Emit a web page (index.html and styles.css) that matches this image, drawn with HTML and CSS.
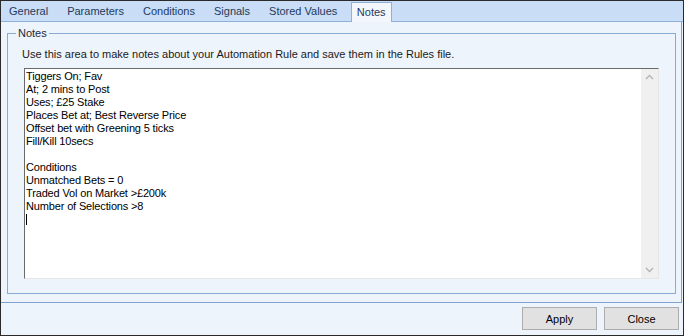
FILE: index.html
```html
<!DOCTYPE html>
<html>
<head>
<meta charset="utf-8">
<link rel="stylesheet" href="styles.css">
</head>
<body>
<div class="window">
  <div class="tabs">
    <div class="tab first">General</div>
    <div class="tab">Parameters</div>
    <div class="tab">Conditions</div>
    <div class="tab">Signals</div>
    <div class="tab">Stored Values</div>
    <div class="tab active">Notes</div>
  </div>
  <div class="panel">
    <fieldset class="group">
      <legend class="legend">Notes</legend>
      <p class="desc">Use this area to make notes about your Automation Rule and save them in the Rules file.</p>
      <div class="editor">
        <div class="lines">
          <div class="line">Tiggers On; Fav</div>
          <div class="line">At; 2 mins to Post</div>
          <div class="line">Uses; £25 Stake</div>
          <div class="line">Places Bet at; Best Reverse Price</div>
          <div class="line">Offset bet with Greening 5 ticks</div>
          <div class="line">Fill/Kill 10secs</div>
          <div class="line">&nbsp;</div>
          <div class="line">Conditions</div>
          <div class="line">Unmatched Bets = 0</div>
          <div class="line">Traded Vol on Market &gt;£200k</div>
          <div class="line">Number of Selections &gt;8</div>
          <div class="line"><span class="caret"></span></div>
        </div>
        <div class="scrollbar">
          <svg class="arrow" width="9" height="6" viewBox="0 0 9 6"><path d="M1 5 L4.5 1.5 L8 5" fill="none" stroke="#b4b4b4" stroke-width="1.4"/></svg>
          <svg class="arrow" width="9" height="6" viewBox="0 0 9 6"><path d="M1 1 L4.5 4.5 L8 1" fill="none" stroke="#b4b4b4" stroke-width="1.4"/></svg>
        </div>
      </div>
    </fieldset>
  </div>
  <div class="footer">
    <button class="btn">Apply</button>
    <button class="btn">Close</button>
  </div>
</div>
</body>
</html>
```
FILE: styles.css
```css
html, body {
  margin: 0;
  padding: 0;
}
body {
  width: 684px;
  height: 336px;
  font-family: "Liberation Sans", Arial, sans-serif;
  font-size: 11px;
  color: #000;
}
.window {
  box-sizing: border-box;
  width: 684px;
  height: 336px;
  border: 1px solid #2a2a2a;
  background: #eef4fb;
  display: flex;
  flex-direction: column;
}
.tabs {
  height: 20px;
  background: #c9ddf6;
  border-bottom: 1px solid #8fb0d8;
  display: flex;
  align-items: flex-end;
}
.tab {
  height: 20px;
  line-height: 20px;
  padding: 0 9.5px;
  color: #1e3a5c;
  box-sizing: border-box;
}
.tab.first {
  margin-left: -1.5px;
}
.tab.active {
  height: 20px;
  margin-bottom: -1px;
  padding: 0 5px;
  background: #f3f7fc;
  border: 1px solid #8fb0d8;
  border-bottom: none;
  line-height: 19px;
  margin-left: 4px;
}
.panel {
  flex: 1;
  border-right: 1px solid #7fa2cf;
  border-bottom: 1px solid #7fa2cf;
  margin-right: 1px;
  display: flex;
  flex-direction: column;
}
.group {
  flex: 1;
  margin: 5px 5px 8px 6px;
  padding: 0 14px 14px 14px;
  border: 1px solid #8aaad2;
  display: flex;
  flex-direction: column;
  min-width: 0;
}
.legend {
  padding: 0 2px;
  margin-left: -6px;
  line-height: 13px;
  color: #1e2a3a;
}
.desc {
  margin: 8px 0 7px 0;
  line-height: 13px;
  color: #1a1a1a;
}
.editor {
  flex: 1;
  margin: 0 2px;
  background: #fff;
  border-top: 1px solid #6a6a6a;
  border-left: 1px solid #6a6a6a;
  border-right: 1px solid #e6e6e6;
  border-bottom: 1px solid #e6e6e6;
  display: flex;
}
.lines {
  flex: 1;
  padding: 1px 0 0 1px;
  letter-spacing: -0.15px;
}
.line {
  line-height: 13px;
  height: 13px;
  white-space: pre;
}
.caret {
  display: inline-block;
  width: 1px;
  height: 11px;
  background: #000;
  vertical-align: top;
  margin-top: 1px;
}
.scrollbar {
  width: 17px;
  background: #f0f0f0;
  display: flex;
  flex-direction: column;
  justify-content: space-between;
  align-items: center;
  padding: 5px 0;
}
.arrow {
  display: block;
}
.footer {
  height: 32px;
  display: flex;
  justify-content: flex-end;
  align-items: flex-start;
  padding: 4px 4px 0 0;
  box-sizing: border-box;
  gap: 7px;
}
.btn {
  width: 75px;
  height: 23px;
  margin: 0;
  padding: 0;
  background: #e1e1e1;
  border: 1px solid #adadad;
  font-family: "Liberation Sans", Arial, sans-serif;
  font-size: 11px;
  color: #000;
}
```
